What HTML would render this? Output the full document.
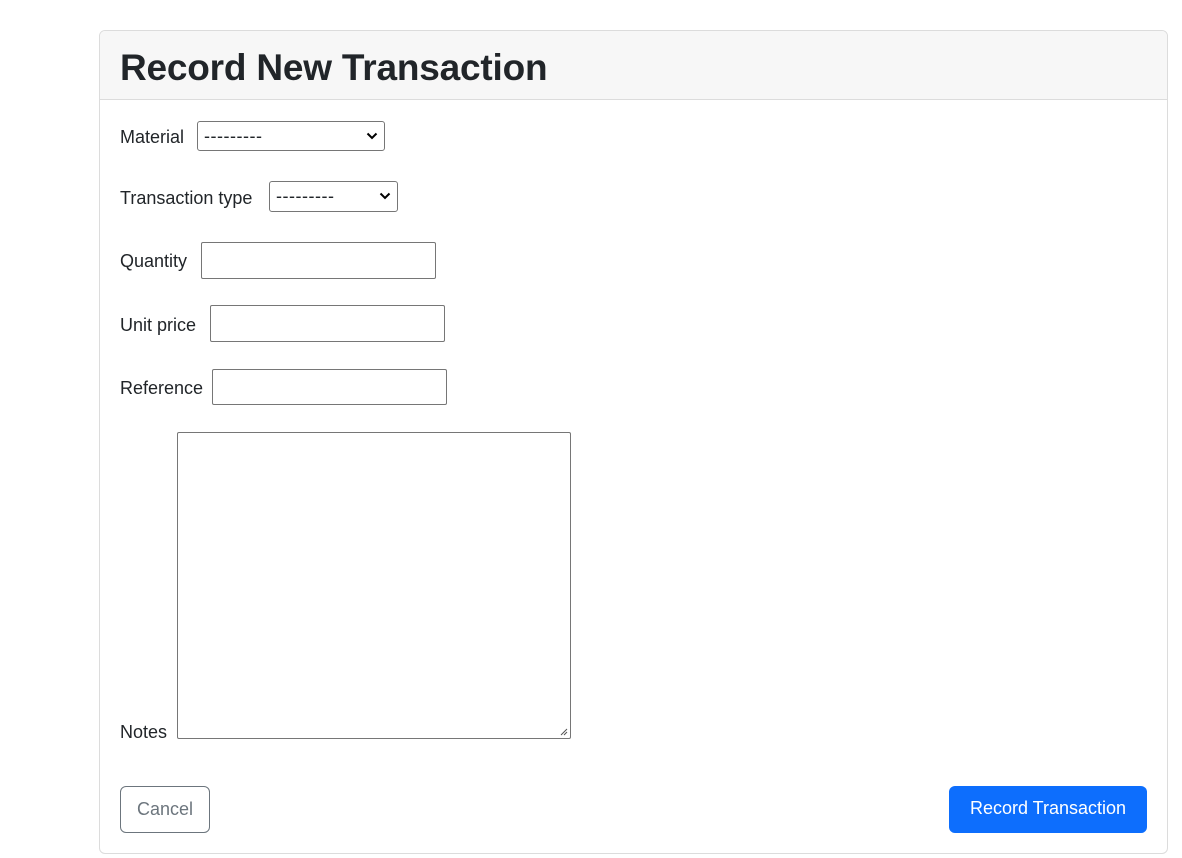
<!DOCTYPE html>
<html><head><style>
body{margin:0;background:#fff;font-family:"Liberation Sans",sans-serif;color:#212529;width:1182px;height:858px;position:relative;overflow:hidden}
.card{position:absolute;left:99px;top:30px;width:1067px;height:822px;border:1px solid #dcdcdc;border-radius:6px;overflow:hidden}
.hdr{position:absolute;left:0;top:0;right:0;height:68px;background:#f7f7f7;border-bottom:1px solid #dcdcdc}
h1{position:absolute;left:20px;top:14px;margin:0;font-size:37px;font-weight:bold;line-height:46px;letter-spacing:-0.2px}
.l{position:absolute;font-size:18px;line-height:22px}
.f{position:absolute;box-sizing:border-box;border:1px solid #767676;background:#fff;border-radius:2px}
.s{border-radius:3px;font-size:18px;padding-left:6px;line-height:28px;letter-spacing:0.5px}
.chev{position:absolute;right:6px;top:9px}
.btn{position:absolute;box-sizing:border-box;border-radius:6px;font-size:18px;text-align:center;line-height:45px}
</style></head><body>
<div class="card">
<div class="hdr"><h1>Record New Transaction</h1></div>
</div>
<div class="l" style="left:120px;top:126px">Material</div>
<div class="f s" style="left:197px;top:121px;width:188px;height:30px">---------<svg class="chev" width="12" height="10" viewBox="0 0 12 10"><path d="M1.5 2.5L6 7l4.5-4.5" stroke="#000" stroke-width="2" fill="none"/></svg></div>
<div class="l" style="left:120px;top:187px">Transaction type</div>
<div class="f s" style="left:269px;top:181px;width:129px;height:31px">---------<svg class="chev" width="12" height="10" viewBox="0 0 12 10"><path d="M1.5 2.5L6 7l4.5-4.5" stroke="#000" stroke-width="2" fill="none"/></svg></div>
<div class="l" style="left:120px;top:250px">Quantity</div>
<div class="f" style="left:201px;top:242px;width:235px;height:37px"></div>
<div class="l" style="left:120px;top:314px">Unit price</div>
<div class="f" style="left:210px;top:305px;width:235px;height:37px"></div>
<div class="l" style="left:120px;top:377px">Reference</div>
<div class="f" style="left:212px;top:369px;width:235px;height:36px"></div>
<div class="l" style="left:120px;top:721px">Notes</div>
<div class="f" style="left:177px;top:432px;width:394px;height:307px"><svg style="position:absolute;right:2px;bottom:2px" width="8" height="8"><path d="M7 1L1 7M7 4L4 7" stroke="#555" stroke-width="1"/></svg></div>
<div class="btn" style="left:120px;top:786px;width:90px;height:47px;border:1px solid #6c757d;color:#6c757d">Cancel</div>
<div class="btn" style="left:949px;top:786px;width:198px;height:47px;background:#0d6efd;color:#fff">Record Transaction</div>
</body></html>
